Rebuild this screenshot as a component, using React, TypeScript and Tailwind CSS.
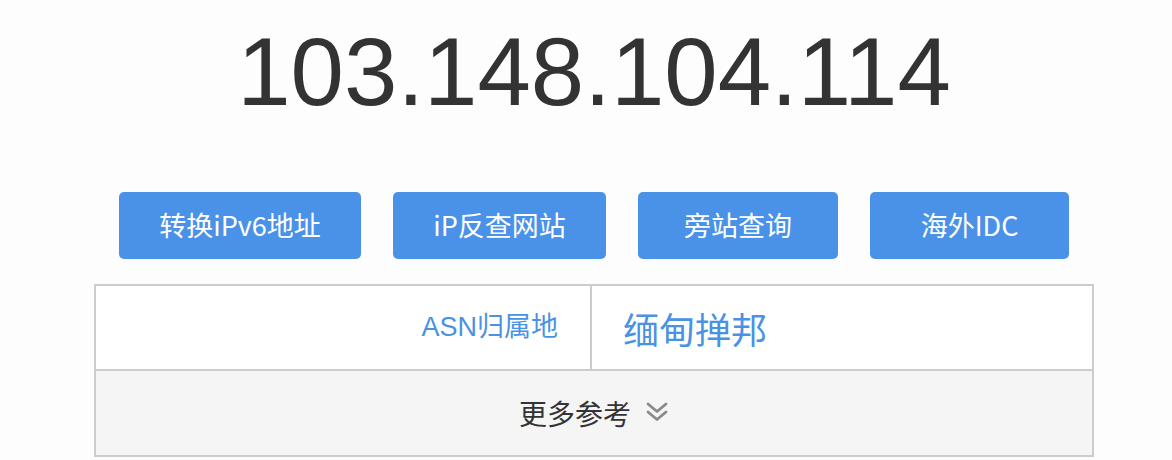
import React from "react";

function DoubleChevron() {
  return (
    <svg width="24" height="24" viewBox="0 0 24 24" fill="none" className="block">
      <path d="M3 3 L12 10.5 L21 3" stroke="#8a8a8a" strokeWidth="2.8" strokeLinecap="round" strokeLinejoin="round" />
      <path d="M3 11 L12 18.5 L21 11" stroke="#8a8a8a" strokeWidth="2.8" strokeLinecap="round" strokeLinejoin="round" />
    </svg>
  );
}

export default function App() {
  const buttons = [
    { label: "转换iPv6地址", w: "w-[242px]" },
    { label: "iP反查网站", w: "w-[213px]" },
    { label: "旁站查询", w: "w-[200px]" },
    { label: "海外IDC", w: "w-[199px]" },
  ];
  return (
    <div className="min-h-screen bg-[#fdfdfd] font-['Liberation_Sans','Noto_Sans_CJK_SC',sans-serif]">
      <div className="ml-[94px] w-[1000px]">
        <div className="pt-[22px] text-center text-[96px] leading-[100px] text-[#333333]">
          103.148.104.114
        </div>
        <div className="mt-[70px] flex justify-center gap-[32px]">
          {buttons.map((b) => (
            <div
              key={b.label}
              className={`${b.w} flex h-[67px] items-center justify-center rounded-[5px] bg-[#4a92e8] font-['Noto_Sans_CJK_SC',sans-serif] text-[27px] text-white`}
            >
              {b.label}
            </div>
          ))}
        </div>
        <div className="mt-[25px] border-2 border-[#cccccc] bg-white">
          <div className="grid h-[85px] grid-cols-[496px_1fr] border-b-2 border-[#cccccc]">
            <div className="flex items-center justify-end border-r-2 border-[#cccccc] pr-[32px] text-[27px] text-[#4a92e3]">
              ASN归属地
            </div>
            <div className="flex items-center pl-[31px] font-['Noto_Sans_CJK_SC',sans-serif] text-[36px] text-[#4a92e3]">
              缅甸掸邦
            </div>
          </div>
          <div className="flex h-[84px] items-center justify-center gap-[14px] bg-[#f5f5f5]">
            <span className="font-['Noto_Sans_CJK_SC',sans-serif] text-[28px] text-[#333333]">更多参考</span>
            <DoubleChevron />
          </div>
        </div>
      </div>
    </div>
  );
}
